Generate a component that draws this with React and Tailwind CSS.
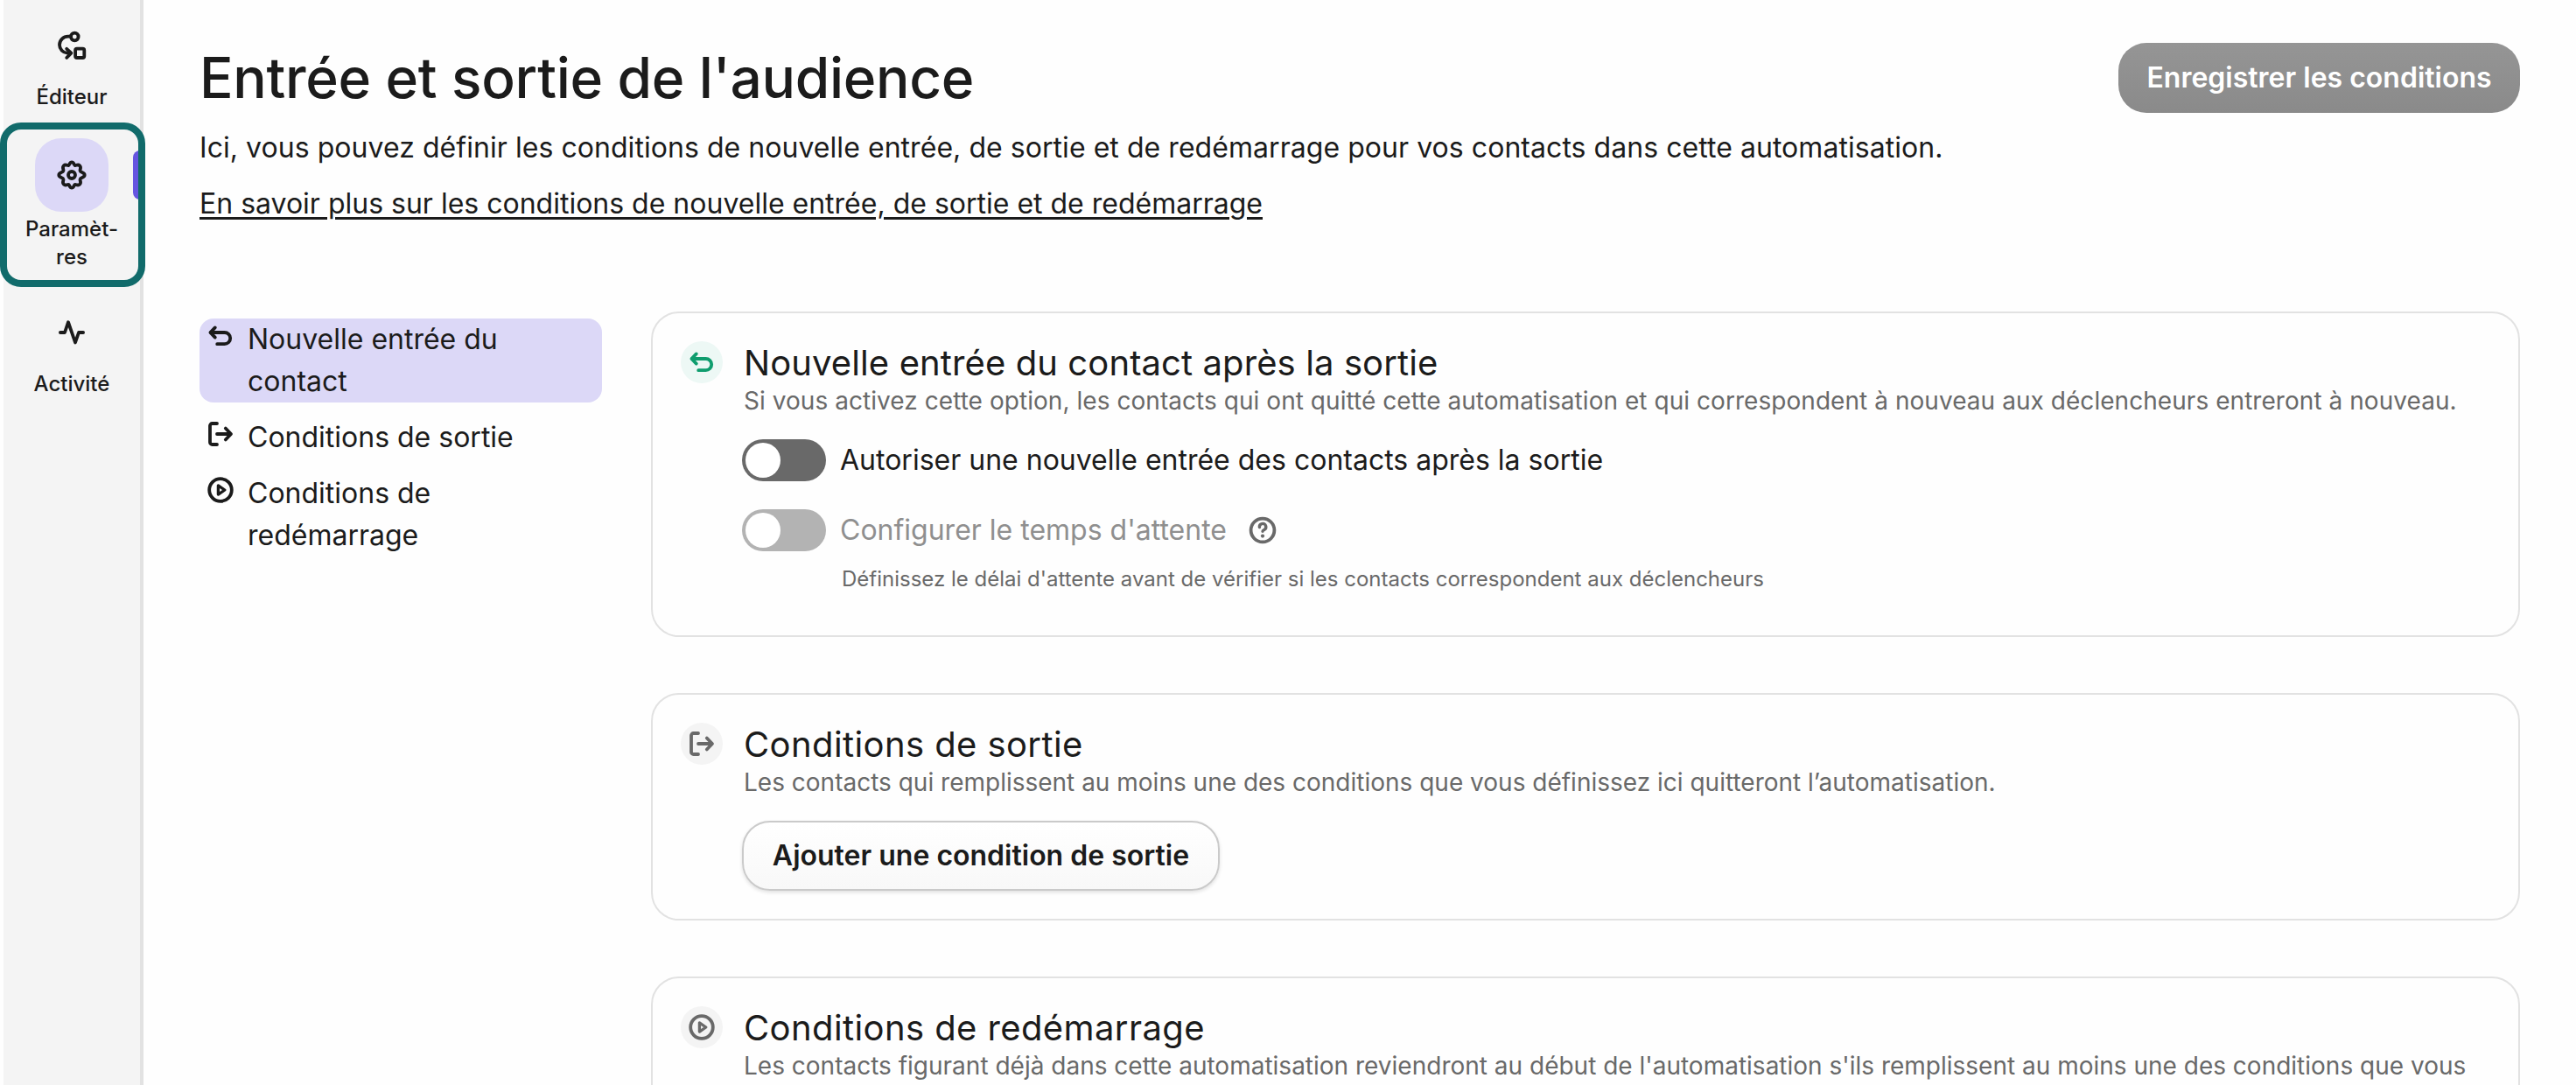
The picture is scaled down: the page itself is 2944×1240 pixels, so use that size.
import React from "react";

const iconProps = {
  viewBox: "0 0 32 32",
  fill: "none",
  stroke: "currentColor",
  strokeWidth: 3.8,
  strokeLinecap: "round",
  strokeLinejoin: "round",
};

function FlowIcon() {
  return (
    <svg {...iconProps} className="h-8 w-8 overflow-visible">
      <circle cx="19.3" cy="6" r="4.3" />
      <path d="M15 5.7H12A9.7 9.7 0 0 0 2 15.3A9.4 9.4 0 0 0 11 24.6H14" />
      <path d="M10.2 19.8l5.2 4.8l-5.2 5.4" />
      <rect x="20.1" y="19.7" width="10.2" height="10.3" rx="1.8" />
    </svg>
  );
}

function GearIcon() {
  return (
    <svg {...iconProps} viewBox="0 0 34 34" className="h-[34px] w-[34px]">
      <circle cx="17" cy="17" r="4" />
      <path d="M17 2.3C19.4 2.3 19.4 5.4 20.6 6C21.9 6.6 24 4.2 26.1 6.3C28.4 8.7 26 10.4 26.6 12.3C27.2 14.4 31.7 13.8 31.7 17C31.7 20.2 27.2 19.6 26.6 21.7C26 23.6 28.4 25.3 26.1 27.7C24 29.8 21.9 27.4 20.6 28C19.4 28.6 19.4 31.7 17 31.7C14.6 31.7 14.6 28.6 13.4 28C12.1 27.4 10 29.8 7.9 27.7C5.6 25.3 8 23.6 7.4 21.7C6.8 19.6 2.3 20.2 2.3 17C2.3 13.8 6.8 14.4 7.4 12.3C8 10.4 5.6 8.7 7.9 6.3C10 4.2 12.1 6.6 13.4 6C14.6 5.4 14.6 2.3 17 2.3Z" />
    </svg>
  );
}

function PulseIcon() {
  return (
    <svg {...iconProps} className="h-8 w-8">
      <path d="M2.9 16H8L12 4.2L20 27.5L24 16H29.1" />
    </svg>
  );
}

function ReturnIcon() {
  return (
    <svg {...iconProps} className="h-8 w-8 shrink-0">
      <path d="M9.8 6.4L4.4 12l5.4 5.6" />
      <path d="M5 12H20.6A6.6 6.6 0 0 1 20.6 25.2H12.2" />
    </svg>
  );
}

function ExitIcon() {
  return (
    <svg {...iconProps} className="h-8 w-8 shrink-0">
      <path d="M12 4H6.5A2.5 2.5 0 0 0 4 6.5V25.5A2.5 2.5 0 0 0 6.5 28H12" />
      <path d="M12 16H27" />
      <path d="M21.8 9.5L28 16l-6.2 6.5" />
    </svg>
  );
}

function PlayIcon() {
  return (
    <svg {...iconProps} className="h-8 w-8 shrink-0">
      <circle cx="16" cy="16" r="12.8" />
      <path d="M13.4 10.9V21.1L20.8 16Z" strokeWidth={3.3} />
    </svg>
  );
}

function HelpIcon() {
  return (
    <svg {...iconProps} className="h-8 w-8">
      <circle cx="16" cy="16" r="13.4" />
      <path d="M12.4 12.6A3.7 3.7 0 1 1 17.8 15.4Q16 16.4 16 17.2" strokeWidth={3.4} />
      <circle cx="16" cy="22.6" r="2.1" fill="currentColor" stroke="none" />
    </svg>
  );
}

function RailItem({ icon, label, active }) {
  return (
    <div className="flex w-full flex-col items-center">
      <div className={`flex h-[84px] w-[84px] items-center justify-center rounded-[30px] ${active ? "bg-[#dcd8f7]" : ""}`}>
        {icon}
      </div>
      <div className={`text-center text-2xl leading-8 font-medium whitespace-pre-line ${active ? "mt-1" : "mt-px mb-[3px]"}`}>
        {label}
      </div>
    </div>
  );
}

function Rail() {
  return (
    <aside className="relative ml-1 h-[1240px] w-40 shrink-0 border-r-4 border-[#e2e2e2] bg-[#f4f4f4] pt-2.5">
      <div className="flex flex-col gap-7">
        <RailItem icon={<FlowIcon />} label="Éditeur" />
        <RailItem icon={<GearIcon />} label={"Paramèt-\nres"} active />
        <RailItem icon={<PulseIcon />} label="Activité" />
      </div>
      {/* Active marker and focus ring */}
      <div className="absolute top-[172px] left-[148px] h-14 w-2.5 rounded-l-lg bg-[#6554e0]" />
      <div className="absolute top-[140px] -left-1 h-[188px] w-[166px] rounded-3xl border-8 border-[#116b6b]" />
    </aside>
  );
}

function NavItem({ icon, active, children }) {
  return (
    <a className={`flex rounded-2xl pr-16 pl-2 text-[32px] leading-[48px] ${active ? "bg-[#dcd8f7]" : ""}`}>
      <span className="mt-1 mr-[15px] h-8">{icon}</span>
      <span>{children}</span>
    </a>
  );
}

function Toggle({ disabled }) {
  return (
    <span className={`flex h-12 w-24 rounded-full p-1 ${disabled ? "bg-[#b3b3b3]" : "bg-[#696969]"}`}>
      <span className="h-10 w-10 rounded-full bg-white" />
    </span>
  );
}

function Card({ icon, tone, title, text, className, children }) {
  return (
    <section className={`rounded-[32px] border-2 border-[#e2e2e2] p-8 ${className}`}>
      <div className="flex">
        <div className={`flex h-12 w-12 shrink-0 items-center justify-center rounded-full ${tone}`}>{icon}</div>
        <div className="ml-[22px] flex-1">
          <h2 className="-mt-px ml-0.5 text-[40px] leading-[52px] font-normal tracking-[0.4px] whitespace-nowrap">{title}</h2>
          <p className="-mt-[3px] ml-0.5 text-[28px] leading-10 whitespace-nowrap text-[#696969]">{text}</p>
          {children}
        </div>
      </div>
    </section>
  );
}

export default function App() {
  return (
    <div className="flex h-[1240px] w-[2944px] overflow-hidden bg-[#fefefe] font-['Inter',sans-serif] text-[#1b1b1b]">
      <Rail />
      <main className="flex-1 pr-16 pl-16">
        <header className="flex items-start justify-between pt-[49px]">
          <div className="whitespace-nowrap">
            <h1 className="text-[64px] leading-[80px] font-[450] tracking-[-0.3px]">Entrée et sortie de l'audience</h1>
            <p className="mt-4 text-[32px] leading-12 tracking-[0.05px]">
              Ici, vous pouvez définir les conditions de nouvelle entrée, de sortie et de redémarrage pour vos contacts dans cette automatisation.
            </p>
            <a className="mt-4 block text-[32px] leading-12 underline decoration-[3px] underline-offset-[4px]">
              En savoir plus sur les conditions de nouvelle entrée, de sortie et de redémarrage
            </a>
          </div>
          <button className="h-20 w-[459px] rounded-[32px] bg-linear-to-b from-[#959595] to-[#8a8a8a] text-[32px] font-semibold text-white">
            Enregistrer les conditions
          </button>
        </header>

        <div className="mt-[99px] flex gap-14">
          <nav className="mt-2 flex w-[460px] flex-col gap-4">
            <NavItem icon={<ReturnIcon />} active>
              Nouvelle entrée du contact
            </NavItem>
            <NavItem icon={<ExitIcon />}>Conditions de sortie</NavItem>
            <NavItem icon={<PlayIcon />}>Conditions de redémarrage</NavItem>
          </nav>

          <div className="flex w-[2136px] flex-col gap-16">
            <Card
              className="h-[372px]"
              icon={<ReturnIcon />}
              tone="bg-[#edf8f5] text-[#0f9d6e]"
              title={<span className="tracking-[0.1px]">Nouvelle entrée du contact après la sortie</span>}
              text={
                <span className="tracking-[0.05px]">
                  Si vous activez cette option, les contacts qui ont quitté cette automatisation et qui correspondent à nouveau aux déclencheurs entreront à nouveau.
                </span>
              }
            >
              <div className="mt-6 flex items-center gap-4 text-[32px]">
                <Toggle />
                <span>Autoriser une nouvelle entrée des contacts après la sortie</span>
              </div>
              <div className="mt-8 flex items-center gap-4 text-[32px] text-[#8f8f8f]">
                <Toggle disabled />
                <span>Configurer le temps d'attente</span>
                <span className="ml-[9px] text-[#696969]">
                  <HelpIcon />
                </span>
              </div>
              <p className="mt-4 ml-[114px] text-2xl leading-8 text-[#696969]">
                Définissez le délai d'attente avant de vérifier si les contacts correspondent aux déclencheurs
              </p>
            </Card>

            <Card
              className="h-[260px]"
              icon={<ExitIcon />}
              tone="bg-[#f4f4f4] text-[#696969]"
              title="Conditions de sortie"
              text="Les contacts qui remplissent au moins une des conditions que vous définissez ici quitteront l’automatisation."
            >
              <button className="mt-6 h-20 w-[546px] rounded-[32px] border-2 border-[#cacaca] bg-linear-to-b from-white to-[#f8f8f8] text-[32px] font-semibold shadow-[0_2px_4px_rgba(0,0,0,0.12)]">
                Ajouter une condition de sortie
              </button>
            </Card>

            <Card
              className="h-[400px]"
              icon={<PlayIcon />}
              tone="bg-[#f4f4f4] text-[#696969]"
              title="Conditions de redémarrage"
              text="Les contacts figurant déjà dans cette automatisation reviendront au début de l'automatisation s'ils remplissent au moins une des conditions que vous"
            />
          </div>
        </div>
      </main>
    </div>
  );
}
